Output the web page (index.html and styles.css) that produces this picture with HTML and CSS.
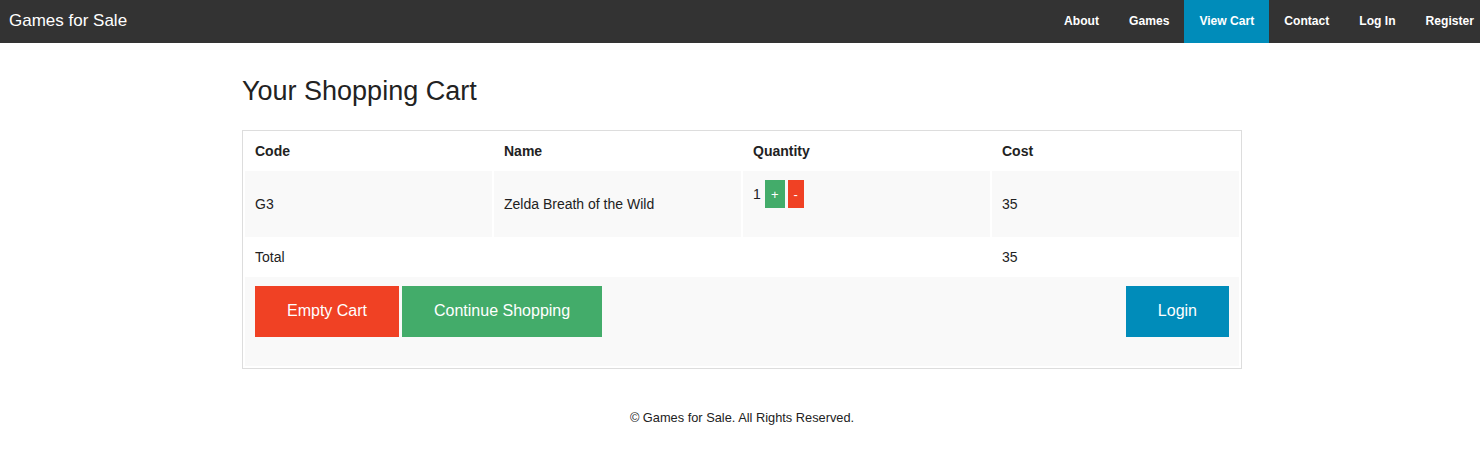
FILE: index.html
```html
<!DOCTYPE html>
<html lang="en">
<head>
<meta charset="utf-8">
<title>Games for Sale - Your Shopping Cart</title>
<link rel="stylesheet" href="styles.css">
</head>
<body>
<nav class="topbar">
  <a class="brand" href="#">Games for Sale</a>
  <ul class="menu">
    <li><a href="#">About</a></li>
    <li><a href="#">Games</a></li>
    <li><a class="active" href="#">View Cart</a></li>
    <li><a href="#">Contact</a></li>
    <li><a href="#">Log In</a></li>
    <li><a href="#">Register</a></li>
  </ul>
</nav>
<main class="page">
  <div class="container">
    <h1 class="title">Your Shopping Cart</h1>
    <table class="cart">
      <thead>
        <tr><th>Code</th><th>Name</th><th>Quantity</th><th>Cost</th></tr>
      </thead>
      <tbody>
        <tr class="shade">
          <td>G3</td>
          <td>Zelda Breath of the Wild</td>
          <td>1 <a class="qbtn plus" href="#">+</a><a class="qbtn minus" href="#">-</a></td>
          <td>35</td>
        </tr>
        <tr>
          <td>Total</td>
          <td></td>
          <td></td>
          <td>35</td>
        </tr>
        <tr class="shade">
          <td colspan="4">
            <div class="actions">
              <a class="btn alert" href="#">Empty Cart</a>
              <a class="btn success" href="#">Continue Shopping</a>
              <a class="btn primary push" href="#">Login</a>
            </div>
          </td>
        </tr>
      </tbody>
    </table>
  </div>
  <footer class="footer">© Games for Sale. All Rights Reserved.</footer>
</main>
</body>
</html>
```
FILE: styles.css
```css
html, body {
  margin: 0;
  padding: 0;
  background: #fff;
  overflow-x: hidden;
}

body {
  font-family: "Liberation Sans", Arial, Helvetica, sans-serif;
  color: #222;
}

.topbar {
  display: flex;
  justify-content: space-between;
  align-items: flex-start;
  height: 43px;
  background: #333;
}

.brand {
  color: #fff;
  text-decoration: none;
  font-size: 17px;
  line-height: 41px;
  padding-left: 9px;
}

.menu {
  list-style: none;
  margin: 0 -9px 0 0;
  padding: 0;
  display: flex;
}

.menu a {
  display: block;
  padding: 0 15px;
  line-height: 43px;
  font-size: 12.1px;
  font-weight: bold;
  color: #fff;
  text-decoration: none;
}

.menu a.active {
  background: #008cba;
}

.page {
  padding: 29px 0 0 4px;
}

.container {
  width: 1000px;
  margin: 0 auto;
}

.title {
  margin: 0 0 20px;
  font-size: 27px;
  line-height: 38px;
  font-weight: normal;
  color: #222;
}

.cart {
  width: 1000px;
  table-layout: fixed;
  border: 1px solid #ddd;
  border-spacing: 2px;
  border-collapse: separate;
}

.cart th,
.cart td {
  text-align: left;
  font-size: 14px;
  line-height: 18px;
  color: #222;
  vertical-align: middle;
}

.cart th {
  padding: 9px 10px;
  font-weight: bold;
}

.cart td {
  padding: 9px 10px;
}

.cart .shade td {
  background: #f9f9f9;
}

.qbtn {
  display: inline-block;
  box-sizing: border-box;
  height: 28px;
  padding: 7px 0 6px;
  margin-bottom: 20px;
  font-size: 13px;
  line-height: 15px;
  text-align: center;
  color: #fff;
  text-decoration: none;
}

.qbtn.plus {
  width: 20px;
  background: #43ac6a;
}

.qbtn.minus {
  width: 16px;
  margin-left: 3px;
  background: #f04124;
}

.actions {
  display: flex;
  align-items: flex-start;
  gap: 3px;
}

.btn {
  display: block;
  padding: 16px 32px 17px;
  margin-bottom: 20px;
  font-size: 16px;
  line-height: 18px;
  color: #fff;
  text-decoration: none;
}

.btn.alert { background: #f04124; }
.btn.success { background: #43ac6a; }
.btn.primary { background: #008cba; }

.btn.push {
  margin-left: auto;
}

.footer {
  padding-top: 40px;
  text-align: center;
  font-size: 12.8px;
  line-height: 18px;
  color: #222;
}
```
